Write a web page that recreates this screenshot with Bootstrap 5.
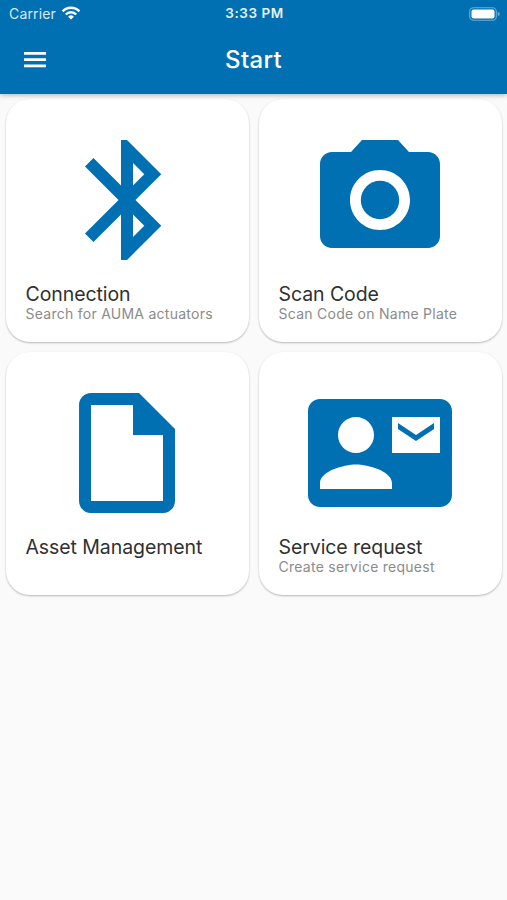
<!DOCTYPE html>
<html lang="en">
<head>
<meta charset="utf-8">
<meta name="viewport" content="width=device-width, initial-scale=1">
<title>Start</title>
<link href="https://cdn.jsdelivr.net/npm/bootstrap@5.3.0/dist/css/bootstrap.min.css" rel="stylesheet">
<style>
body { background: #fafafa; font-family: Inter, "Liberation Sans", sans-serif; min-height: 900px; overflow: hidden; }
.app-top { background: #0070b3; height: 94px; box-shadow: 0 1px 5px rgba(0,0,0,.3); }
.status { height: 27px; font-size: 14px; line-height: 27px; padding: 0 7px 0 9px; }
.status > * { flex: 1 1 0; }
.carrier { letter-spacing: .15px; color: #d9eaf5; }
.carrier svg { margin-left: 5px; margin-top: -2px; }
.clock { font-weight: 600; font-size: 13.5px; letter-spacing: .55px; color: #e6f2fa; }
.toolbar { height: 66px; padding: 0 23px; }
.menu-btn { width: 24px; height: 24px; line-height: 0; }
.screen-title { font-size: 24px; font-weight: 500; line-height: 30px; letter-spacing: .3px; }
.tiles { display: grid; grid-template-columns: 243px 243px; grid-auto-rows: 243px; gap: 10px; padding: 5px 0 0 6px; }
.tile { border-radius: 24px; box-shadow: 0 1px 2px rgba(0,0,0,.27); padding: 29px 20px 0 19.5px; color: #0070b3; }
.tile svg { display: block; margin: 0 auto 0 29.5px; }
.tile-name { font-size: 19.5px; line-height: 24px; margin-top: 9.5px; color: #303030; letter-spacing: -.08px; }
.tile-note { font-size: 14px; line-height: 16px; color: #8b8b8b; letter-spacing: .26px; }
</style>
</head>
<body>
<header class="app-top text-white position-relative">
  <div class="status d-flex align-items-center">
    <div class="carrier d-flex align-items-center">Carrier
      <svg width="20" height="14" viewBox="0 0 20 14" fill="none" stroke="#fff" stroke-width="2.4"><path d="M1.6 5.3a11.8 11.8 0 0 1 16.8 0M4.8 8.5a7.3 7.3 0 0 1 10.4 0"/><path d="M10 13.5 7.1 10.7a4.1 4.1 0 0 1 5.8 0z" fill="#fff" stroke="none"/></svg>
    </div>
    <div class="clock text-center">3:33 PM</div>
    <div class="d-flex justify-content-end">
      <svg width="31" height="14" viewBox="0 0 31 14"><rect x=".7" y=".7" width="26.6" height="12.6" rx="3.8" fill="none" stroke="#6dadd5" stroke-width="1.1"/><rect x="2.5" y="2.5" width="23" height="9" rx="2" fill="#fff"/><path d="M28.8 4.8q2 .6 2 2.2t-2 2.2z" fill="#6dadd5"/></svg>
    </div>
  </div>
  <nav class="toolbar d-flex align-items-center justify-content-between">
    <button class="menu-btn btn p-0 border-0 text-white" aria-label="Menu"><svg width="24" height="24" viewBox="0 0 24 24" fill="#fff"><path d="M1 4h22v2.7H1zM1 10.3h22V13H1zM1 16.6h22v2.7H1z"/></svg></button>
    <div class="screen-title">Start</div>
    <div class="menu-btn"></div>
  </nav>
</header>
<main class="tiles">
  <section class="tile bg-white">
    <svg width="144" height="144" viewBox="0 0 24 24" fill="currentColor"><path d="M17.71 7.71 12 2h-1v7.59L6.41 5 5 6.41 10.59 12 5 17.59 6.41 19 11 14.41V22h1l5.71-5.71L13.41 12l4.3-4.29zM13 5.83l1.88 1.88L13 9.59V5.83zm1.88 10.46L13 18.17v-3.76l1.88 1.88z"/></svg>
    <div class="tile-name">Connection</div>
    <div class="tile-note">Search for AUMA actuators</div>
  </section>
  <section class="tile bg-white">
    <svg width="144" height="144" viewBox="0 0 24 24" fill="currentColor"><circle cx="12" cy="12" r="3.2"/><path d="M9 2 7.17 4H4c-1.1 0-2 .9-2 2v12c0 1.1.9 2 2 2h16c1.1 0 2-.9 2-2V6c0-1.1-.9-2-2-2h-3.17L15 2H9zm3 15c-2.76 0-5-2.24-5-5s2.24-5 5-5 5 2.24 5 5-2.24 5-5 5z"/></svg>
    <div class="tile-name">Scan Code</div>
    <div class="tile-note">Scan Code on Name Plate</div>
  </section>
  <section class="tile bg-white">
    <svg width="144" height="144" viewBox="0 0 24 24" fill="currentColor"><path d="M14 2H6c-1.1 0-1.99.9-1.99 2L4 20c0 1.1.89 2 1.99 2H18c1.1 0 2-.9 2-2V8l-6-6zM6 20V4h7v5h5v11H6z"/></svg>
    <div class="tile-name">Asset Management</div>
  </section>
  <section class="tile bg-white">
    <svg width="144" height="144" viewBox="0 0 24 24" fill="currentColor"><path d="M21 8V7l-3 2-3-2v1l3 2 3-2zm1-5H2C.9 3 0 3.9 0 5v14c0 1.1.9 2 2 2h20c1.1 0 1.99-.9 1.99-2L24 5c0-1.1-.9-2-2-2zM8 6c1.66 0 3 1.34 3 3s-1.34 3-3 3-3-1.34-3-3 1.34-3 3-3zm6 12H2v-1c0-2 4-3.1 6-3.1s6 1.1 6 3.1v1zm8-6h-8V6h8v6z"/></svg>
    <div class="tile-name">Service request</div>
    <div class="tile-note">Create service request</div>
  </section>
</main>
<script src="https://cdn.jsdelivr.net/npm/bootstrap@5.3.0/dist/js/bootstrap.bundle.min.js"></script>
</body>
</html>
